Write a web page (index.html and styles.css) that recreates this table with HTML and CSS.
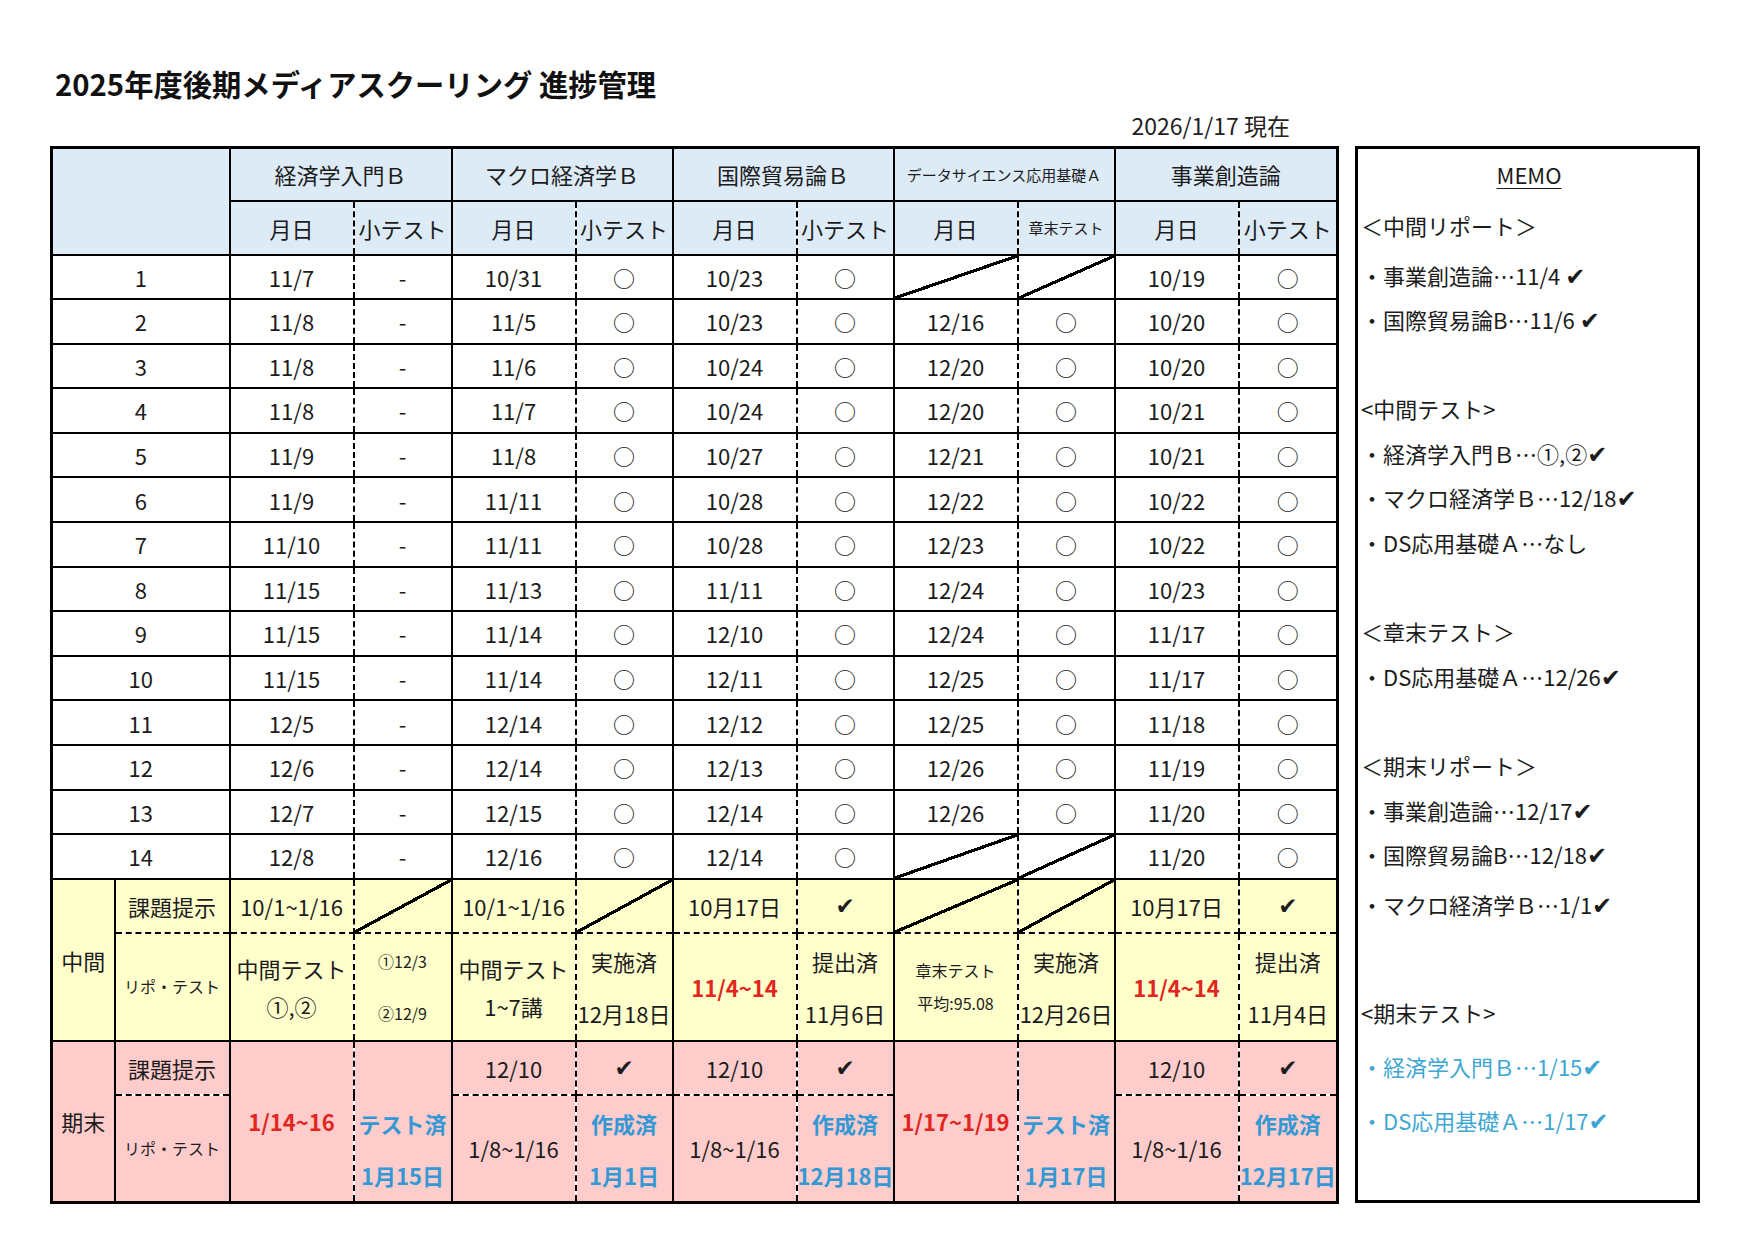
FILE: index.html
```html
<!DOCTYPE html>
<html lang="ja">
<head>
<meta charset="utf-8">
<title>2025年度後期メディアスクーリング 進捗管理</title>
<link rel="stylesheet" href="styles.css">
</head>
<body>
<div class="page">
  <h1 class="title">2025年度後期メディアスクーリング 進捗管理</h1>
  <div class="asof">2026/1/17 現在</div>
  <div class="board">
    <table class="sheet">
      <colgroup>
        <col class="c-lbl"><col class="c-sub">
        <col class="c-date"><col class="c-t1">
        <col class="c-date"><col class="c-t2">
        <col class="c-date"><col class="c-t2">
        <col class="c-date"><col class="c-t2">
        <col class="c-date"><col class="c-t3">
      </colgroup>
      <tr class="hrow">
        <td class="hd" rowspan="2" colspan="2"></td>
        <td class="hd" colspan="2">経済学入門Ｂ</td>
        <td class="hd" colspan="2">マクロ経済学Ｂ</td>
        <td class="hd" colspan="2">国際貿易論Ｂ</td>
        <td class="hd xs" colspan="2">データサイエンス応用基礎Ａ</td>
        <td class="hd" colspan="2">事業創造論</td>
      </tr>
      <tr class="hrow">
        <td class="hd d">月日</td><td class="hd t">小テスト</td>
        <td class="hd d">月日</td><td class="hd t">小テスト</td>
        <td class="hd d">月日</td><td class="hd t">小テスト</td>
        <td class="hd d">月日</td><td class="hd t xs">章末テスト</td>
        <td class="hd d">月日</td><td class="hd t">小テスト</td>
      </tr>
      <tr class="r"><td colspan="2">1</td><td class="d">11/7</td><td class="t">-</td><td class="d">10/31</td><td class="t">○</td><td class="d">10/23</td><td class="t">○</td><td class="d slash"></td><td class="t slash"></td><td class="d">10/19</td><td class="t">○</td></tr>
      <tr class="r"><td colspan="2">2</td><td class="d">11/8</td><td class="t">-</td><td class="d">11/5</td><td class="t">○</td><td class="d">10/23</td><td class="t">○</td><td class="d">12/16</td><td class="t">○</td><td class="d">10/20</td><td class="t">○</td></tr>
      <tr class="r"><td colspan="2">3</td><td class="d">11/8</td><td class="t">-</td><td class="d">11/6</td><td class="t">○</td><td class="d">10/24</td><td class="t">○</td><td class="d">12/20</td><td class="t">○</td><td class="d">10/20</td><td class="t">○</td></tr>
      <tr class="r"><td colspan="2">4</td><td class="d">11/8</td><td class="t">-</td><td class="d">11/7</td><td class="t">○</td><td class="d">10/24</td><td class="t">○</td><td class="d">12/20</td><td class="t">○</td><td class="d">10/21</td><td class="t">○</td></tr>
      <tr class="r"><td colspan="2">5</td><td class="d">11/9</td><td class="t">-</td><td class="d">11/8</td><td class="t">○</td><td class="d">10/27</td><td class="t">○</td><td class="d">12/21</td><td class="t">○</td><td class="d">10/21</td><td class="t">○</td></tr>
      <tr class="r"><td colspan="2">6</td><td class="d">11/9</td><td class="t">-</td><td class="d">11/11</td><td class="t">○</td><td class="d">10/28</td><td class="t">○</td><td class="d">12/22</td><td class="t">○</td><td class="d">10/22</td><td class="t">○</td></tr>
      <tr class="r"><td colspan="2">7</td><td class="d">11/10</td><td class="t">-</td><td class="d">11/11</td><td class="t">○</td><td class="d">10/28</td><td class="t">○</td><td class="d">12/23</td><td class="t">○</td><td class="d">10/22</td><td class="t">○</td></tr>
      <tr class="r"><td colspan="2">8</td><td class="d">11/15</td><td class="t">-</td><td class="d">11/13</td><td class="t">○</td><td class="d">11/11</td><td class="t">○</td><td class="d">12/24</td><td class="t">○</td><td class="d">10/23</td><td class="t">○</td></tr>
      <tr class="r"><td colspan="2">9</td><td class="d">11/15</td><td class="t">-</td><td class="d">11/14</td><td class="t">○</td><td class="d">12/10</td><td class="t">○</td><td class="d">12/24</td><td class="t">○</td><td class="d">11/17</td><td class="t">○</td></tr>
      <tr class="r"><td colspan="2">10</td><td class="d">11/15</td><td class="t">-</td><td class="d">11/14</td><td class="t">○</td><td class="d">12/11</td><td class="t">○</td><td class="d">12/25</td><td class="t">○</td><td class="d">11/17</td><td class="t">○</td></tr>
      <tr class="r"><td colspan="2">11</td><td class="d">12/5</td><td class="t">-</td><td class="d">12/14</td><td class="t">○</td><td class="d">12/12</td><td class="t">○</td><td class="d">12/25</td><td class="t">○</td><td class="d">11/18</td><td class="t">○</td></tr>
      <tr class="r"><td colspan="2">12</td><td class="d">12/6</td><td class="t">-</td><td class="d">12/14</td><td class="t">○</td><td class="d">12/13</td><td class="t">○</td><td class="d">12/26</td><td class="t">○</td><td class="d">11/19</td><td class="t">○</td></tr>
      <tr class="r"><td colspan="2">13</td><td class="d">12/7</td><td class="t">-</td><td class="d">12/15</td><td class="t">○</td><td class="d">12/14</td><td class="t">○</td><td class="d">12/26</td><td class="t">○</td><td class="d">11/20</td><td class="t">○</td></tr>
      <tr class="r"><td colspan="2">14</td><td class="d">12/8</td><td class="t">-</td><td class="d">12/16</td><td class="t">○</td><td class="d">12/14</td><td class="t">○</td><td class="d slash"></td><td class="t slash"></td><td class="d">11/20</td><td class="t">○</td></tr>

      <tr class="k mid">
        <td class="lbl" rowspan="2">中間</td>
        <td class="kd">課題提示</td>
        <td class="d kd">10/1~1/16</td>
        <td class="t kd slash"></td>
        <td class="d kd">10/1~1/16</td>
        <td class="t kd slash"></td>
        <td class="d kd">10月17日</td>
        <td class="t kd"><span class="chk">✔</span></td>
        <td class="d kd slash"></td>
        <td class="t kd slash"></td>
        <td class="d kd">10月17日</td>
        <td class="t kd"><span class="chk">✔</span></td>
      </tr>
      <tr class="p mid">
        <td class="pd sm">リポ・テスト</td>
        <td class="d pd lh38">中間テスト<br>①,②</td>
        <td class="t pd sm lh54">①12/3<br>②12/9</td>
        <td class="d pd lh38">中間テスト<br>1~7講</td>
        <td class="t pd lh54">実施済<br>12月18日</td>
        <td class="d pd red">11/4~14</td>
        <td class="t pd lh54">提出済<br>11月6日</td>
        <td class="d pd sm lh33">章末テスト<br>平均:95.08</td>
        <td class="t pd lh54">実施済<br>12月26日</td>
        <td class="d pd red">11/4~14</td>
        <td class="t pd lh54">提出済<br>11月4日</td>
      </tr>

      <tr class="k fin">
        <td class="lbl" rowspan="2">期末</td>
        <td class="kd">課題提示</td>
        <td class="d red" rowspan="2">1/14~16</td>
        <td class="t blue lh54 bot" rowspan="2">テスト済<br>1月15日</td>
        <td class="d kd">12/10</td>
        <td class="t kd"><span class="chk">✔</span></td>
        <td class="d kd">12/10</td>
        <td class="t kd"><span class="chk">✔</span></td>
        <td class="d red" rowspan="2">1/17~1/19</td>
        <td class="t blue lh54 bot" rowspan="2">テスト済<br>1月17日</td>
        <td class="d kd">12/10</td>
        <td class="t kd"><span class="chk">✔</span></td>
      </tr>
      <tr class="p fin">
        <td class="pd sm">リポ・テスト</td>
        <td class="d pd">1/8~1/16</td>
        <td class="t pd blue lh54">作成済<br>1月1日</td>
        <td class="d pd">1/8~1/16</td>
        <td class="t pd blue lh54">作成済<br>12月18日</td>
        <td class="d pd">1/8~1/16</td>
        <td class="t pd blue lh54">作成済<br>12月17日</td>
      </tr>
    </table>

    <aside class="memo">
      <div class="memo-title"><span>MEMO</span></div>
      <div class="ml big">＜中間リポート＞</div>
      <div class="ml">・事業創造論…11/4 <span class="mchk">✔</span></div>
      <div class="ml">・国際貿易論B…11/6 <span class="mchk">✔</span></div>
      <div class="ml skip1">&lt;中間テスト&gt;</div>
      <div class="ml">・経済学入門Ｂ…①,②<span class="mchk">✔</span></div>
      <div class="ml">・マクロ経済学Ｂ…12/18<span class="mchk">✔</span></div>
      <div class="ml">・DS応用基礎Ａ…なし</div>
      <div class="ml skip1">＜章末テスト＞</div>
      <div class="ml">・DS応用基礎Ａ…12/26<span class="mchk">✔</span></div>
      <div class="ml skip1">＜期末リポート＞</div>
      <div class="ml">・事業創造論…12/17<span class="mchk">✔</span></div>
      <div class="ml">・国際貿易論B…12/18<span class="mchk">✔</span></div>
      <div class="ml k53">・マクロ経済学Ｂ…1/1<span class="mchk">✔</span></div>
      <div class="ml h54 skip54">&lt;期末テスト&gt;</div>
      <div class="ml k53 cyan">・経済学入門Ｂ…1/15<span class="mchk">✔</span></div>
      <div class="ml h54 cyan">・DS応用基礎Ａ…1/17<span class="mchk">✔</span></div>
    </aside>
  </div>
</div>
</body>
</html>
```

FILE: styles.css
```css
* { box-sizing: border-box; }

body {
  margin: 0;
  background: #ffffff;
  color: #1c1c1c;
  font-family: "Noto Sans CJK JP", "Noto Sans", sans-serif;
}

.page {
  padding: 62px 0 0 50px;
  width: 1754px;
}

.title {
  margin: 0 0 0 5px;
  font-size: 29.3px;
  font-weight: 700;
  line-height: 42px;
  color: #111;
}

.asof {
  width: 1240px;
  margin-top: 5px;
  text-align: right;
  font-size: 23px;
  line-height: 32px;
  color: #222;
}

.board {
  display: flex;
  align-items: flex-start;
  gap: 16px;
  margin-top: 5px;
}

/* ---------- table ---------- */
.sheet {
  border-collapse: collapse;
  table-layout: fixed;
  width: 1286px;
  border: 3px solid #000;
}

.c-lbl { width: 63px; }
.c-sub { width: 115px; }
.c-date { width: 124px; }
.c-t1 { width: 98px; }
.c-t2 { width: 97px; }
.c-t3 { width: 99px; }

.sheet td {
  border: 2px solid #000;
  padding: 0;
  text-align: center;
  vertical-align: middle;
  font-size: 22px;
  line-height: 1.2;
  white-space: nowrap;
  overflow: hidden;
}

.sheet td.d { border-right-style: dashed; }
.sheet td.t { border-left-style: dashed; }

.hrow { height: 53.5px; }
.r { height: 44.6px; }
.k { height: 54px; }
.p { height: 108px; }

.sheet td.hd { background-color: #ddebf7; }
.mid td { background-color: #ffffcc; }
.fin td { background-color: #ffcccc; }

.sheet td.kd { border-bottom-style: dashed; }
.sheet td.pd { border-top-style: dashed; }

.sheet td.xs { font-size: 15px; }
.sheet td.sm { font-size: 16px; }

.sheet td.lh38 { line-height: 38px; }
.sheet td.lh33 { line-height: 33px; }
.sheet td.lh54 { line-height: 52px; }
.sheet td.bot { vertical-align: bottom; }

.sheet td.slash {
  background-image: linear-gradient(to bottom right,
    transparent calc(50% - 1.6px),
    #000 calc(50% - 1.6px),
    #000 calc(50% + 1.6px),
    transparent calc(50% + 1.6px));
}

.red {
  color: #e0261e;
  font-weight: 700;
}

.blue {
  color: #3398d3;
  font-weight: 700;
}

.chk {
  font-family: "DejaVu Sans", sans-serif;
  font-size: 23px;
}

/* ---------- memo ---------- */
.memo {
  width: 345px;
  height: 1057px;
  border: 3px solid #000;
  padding: 0 0 0 3px;
  font-size: 22px;
  color: #1c1c1c;
}

.memo-title {
  height: 50px;
  line-height: 50px;
  text-align: center;
  font-size: 22px;
}

.memo-title span {
  text-decoration: underline;
  text-underline-offset: 4px;
  text-decoration-thickness: 1px;
}

.ml {
  height: 44.6px;
  line-height: 44.6px;
  white-space: nowrap;
}

.ml.big { height: 53.5px; line-height: 53.5px; }
.ml.skip1 { margin-top: 44.6px; }
.ml.k53 { height: 54px; line-height: 54px; }
.ml.h54 { height: 54px; line-height: 54px; }
.ml.skip54 { margin-top: 54px; }

.mchk {
  font-family: "DejaVu Sans", sans-serif;
  font-size: 24px;
}

.cyan { color: #3fa7d3; }
```
